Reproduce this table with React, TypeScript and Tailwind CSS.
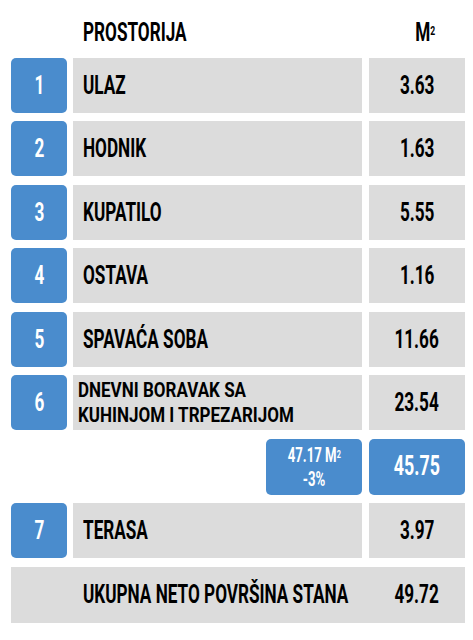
import React from "react";

const rows = [
  { n: "1", name: "ULAZ", v: "3.63" },
  { n: "2", name: "HODNIK", v: "1.63" },
  { n: "3", name: "KUPATILO", v: "5.55" },
  { n: "4", name: "OSTAVA", v: "1.16" },
  { n: "5", name: "SPAVAĆA SOBA", v: "11.66" },
];

const font = { fontFamily: 'Roboto, "Liberation Sans", sans-serif' };

function L({ children }: { children: React.ReactNode }) {
  return <span className="inline-block whitespace-nowrap origin-left scale-x-[0.66]">{children}</span>;
}
function C({ children }: { children: React.ReactNode }) {
  return <span className="inline-block whitespace-nowrap origin-center scale-x-[0.66]">{children}</span>;
}

function Num({ n }: { n: string }) {
  return (
    <div className="w-[56px] h-[55px] rounded-[5px] bg-[#4a8ccd] text-white flex items-center justify-center text-[26px] font-bold">
      <C>{n}</C>
    </div>
  );
}

function Row({ n, name, v }: { n: string; name: string; v: string }) {
  return (
    <div className="flex h-[55px]">
      <Num n={n} />
      <div className="ml-[6px] w-[289px] bg-[#dcdcdc] flex items-center pl-[10px] text-[26px] font-bold text-black">
        <L>{name}</L>
      </div>
      <div className="ml-[7px] w-[96px] bg-[#dcdcdc] flex items-center justify-center text-[26px] font-bold text-black">
        <C>{v}</C>
      </div>
    </div>
  );
}

export default function App() {
  return (
    <div className="w-[473px] h-[640px] bg-white" style={font}>
      <div className="pl-[11px] pt-[15px] flex flex-col gap-[8.5px]">
        <div className="flex h-[34px] items-center text-[26px] font-bold text-black">
          <div className="w-[72px]" />
          <div className="w-[296px]">
            <L>PROSTORIJA</L>
          </div>
          <div className="w-[96px] text-center">
            <C>
              M<sup className="text-[13px] relative -top-[6px]">2</sup>
            </C>
          </div>
        </div>
        {rows.map((r) => (
          <Row key={r.n} {...r} />
        ))}
        <div className="flex h-[55px]">
          <Num n="6" />
          <div className="ml-[6px] w-[289px] bg-[#dcdcdc] flex flex-col justify-center pl-[5px] text-[21px] leading-[25px] font-bold text-black">
            <div>
              <span className="inline-block whitespace-nowrap origin-left scale-x-[0.81]">DNEVNI BORAVAK SA</span>
            </div>
            <div>
              <span className="inline-block whitespace-nowrap origin-left scale-x-[0.81]">KUHINJOM I TRPEZARIJOM</span>
            </div>
          </div>
          <div className="ml-[7px] w-[96px] bg-[#dcdcdc] flex items-center justify-center text-[26px] font-bold text-black">
            <C>23.54</C>
          </div>
        </div>
        <div className="flex h-[56px] justify-end pr-[8px]">
          <div className="w-[96px] rounded-[5px] bg-[#4a8ccd] text-white flex flex-col items-center justify-center text-[20px] leading-[24px] font-bold">
            <div>
              <C>
                47.17 M<sup className="text-[11px] relative -top-[4px]">2</sup>
              </C>
            </div>
            <div>
              <C>-3%</C>
            </div>
          </div>
          <div className="ml-[7px] w-[96px] rounded-[5px] bg-[#4a8ccd] text-white flex items-center justify-center text-[27px] font-bold">
            <C>45.75</C>
          </div>
        </div>
        <Row n="7" name="TERASA" v="3.97" />
        <div className="flex h-[56px] w-[454px] bg-[#dcdcdc] items-center text-[26px] font-bold text-black">
          <div className="pl-[72px] w-[358px]">
            <L>UKUPNA NETO POVRŠINA STANA</L>
          </div>
          <div className="w-[96px] text-center">
            <C>49.72</C>
          </div>
        </div>
      </div>
    </div>
  );
}
